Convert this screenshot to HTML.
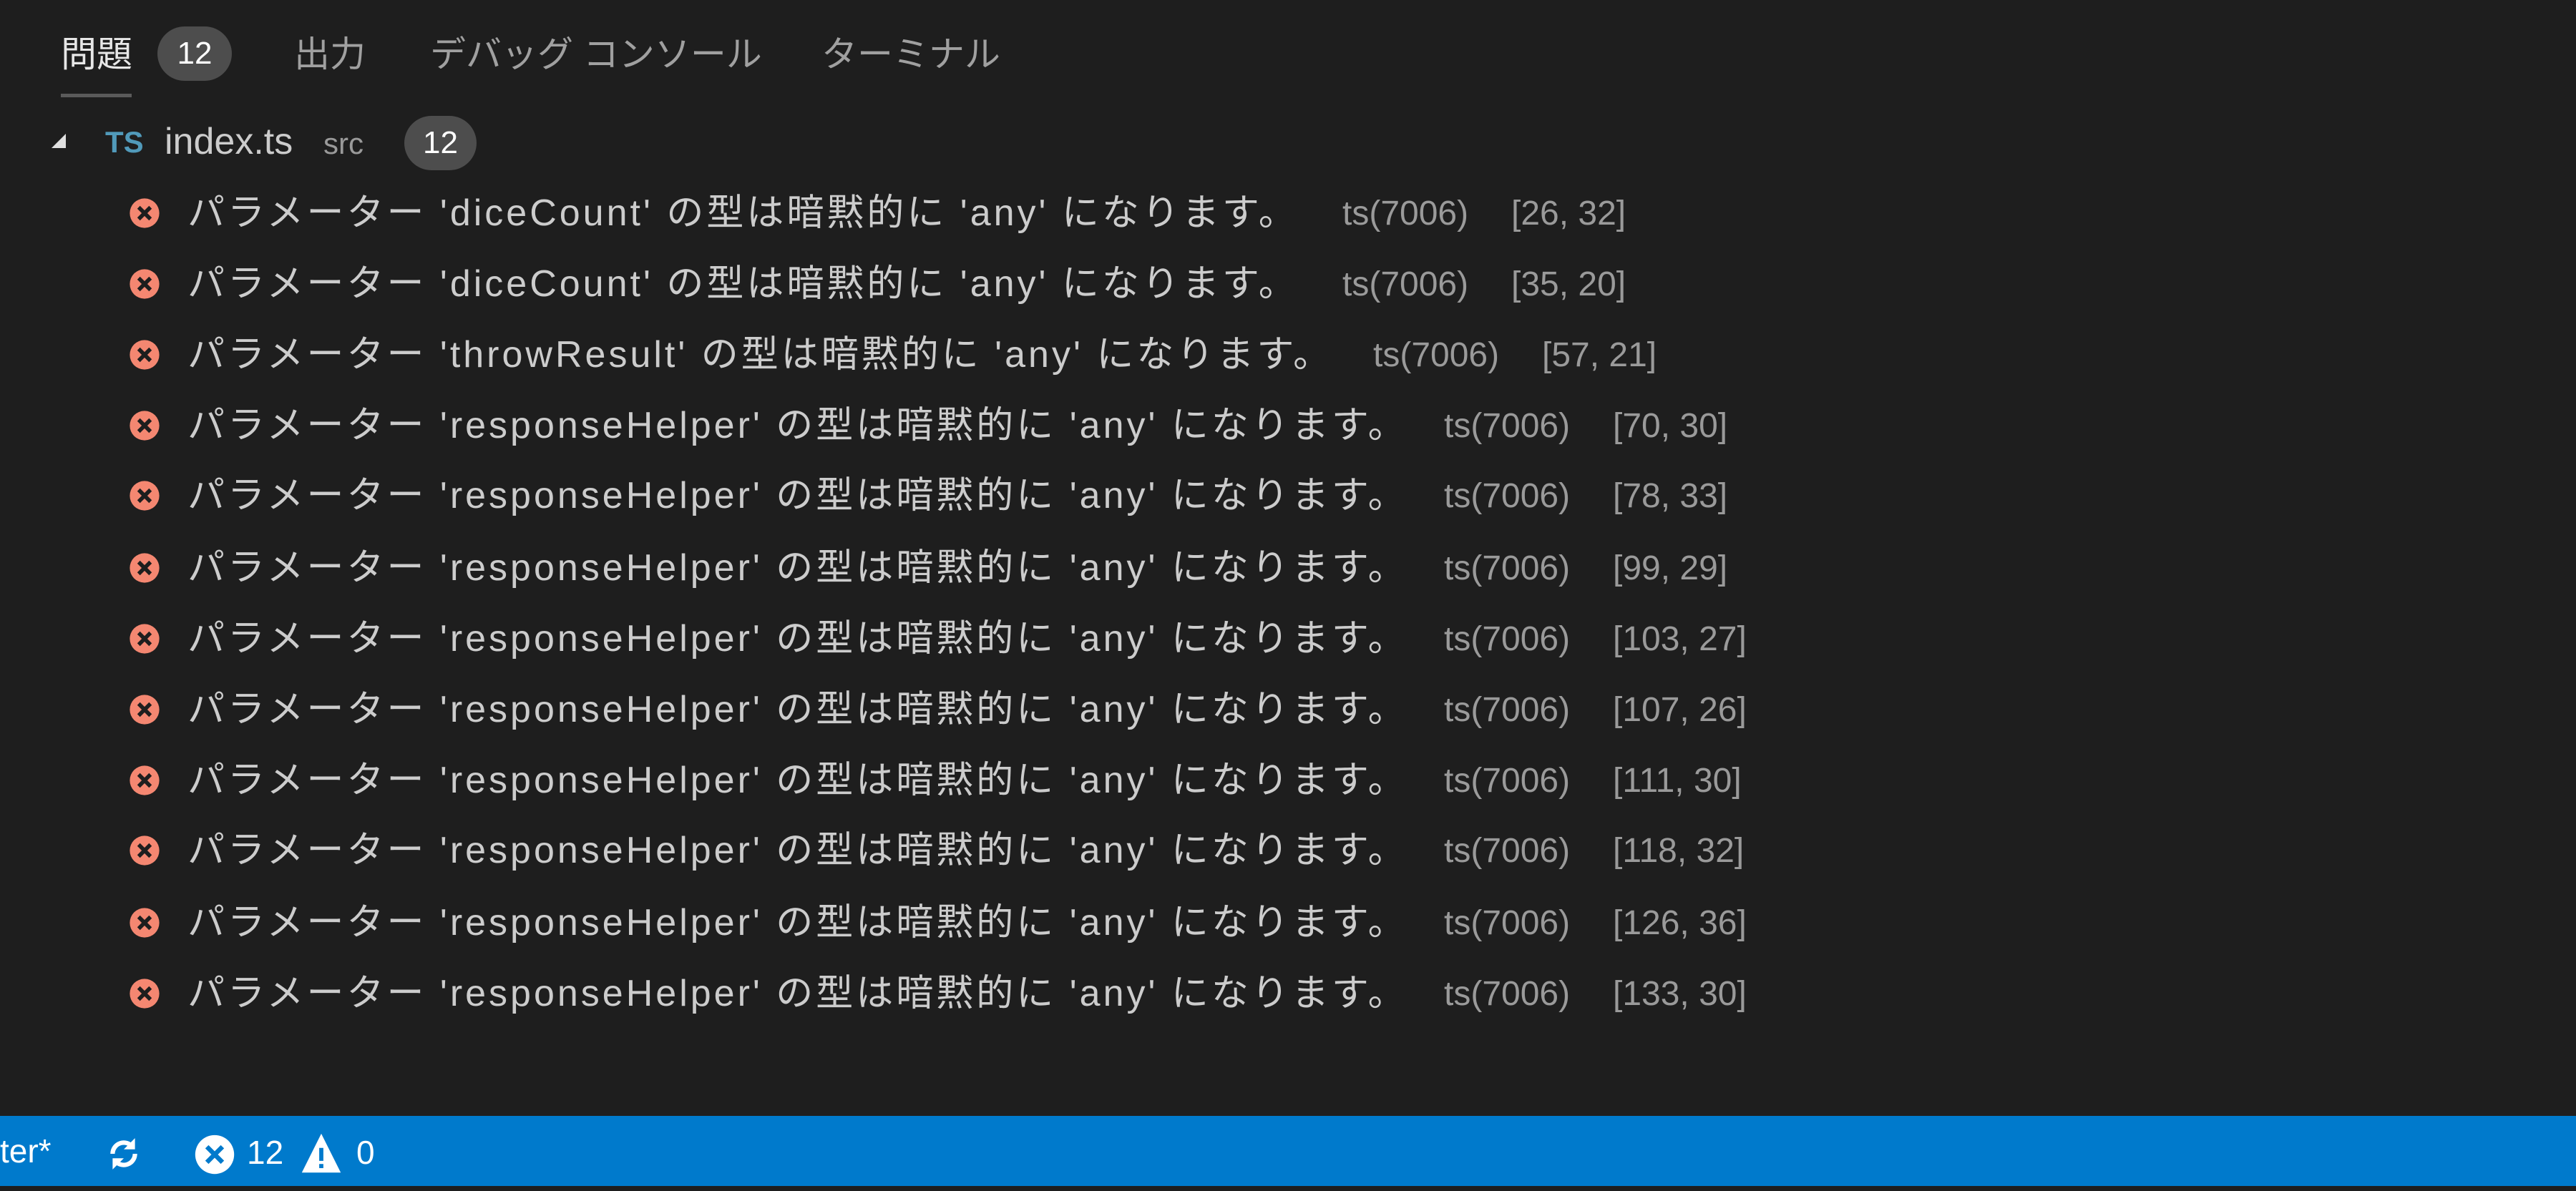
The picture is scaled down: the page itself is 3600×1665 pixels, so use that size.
<!DOCTYPE html>
<html><head><meta charset="utf-8"><style>
html,body{margin:0;padding:0;}
body{width:3600px;height:1665px;background:#1e1e1e;position:relative;overflow:hidden;font-family:"Liberation Sans","Noto Sans CJK JP",sans-serif;color:#cccccc;}
.a{position:absolute;white-space:nowrap;line-height:1;}
.tab{font-size:50px;top:51px;color:#a0a0a0;}
.badge{position:absolute;background:#4d4d4d;color:#fff;border-radius:40px;font-size:44px;text-align:center;}
.row{position:absolute;left:0;height:99px;width:3600px;}
.ic{position:absolute;left:180px;width:44px;height:44px;top:27px;}
.msg{position:absolute;left:262px;top:23px;font-size:52px;letter-spacing:4px;color:#cccccc;white-space:nowrap;line-height:1;}
.ts{position:absolute;top:26px;font-size:48px;color:#9a9a9a;white-space:nowrap;line-height:1;}
</style></head><body>
<div class="a tab" style="left:85px;color:#e7e7e7">問題</div>
<div class="badge" style="left:220px;top:37px;width:104px;height:76px;line-height:76px">12</div>
<div class="a tab" style="left:411px">出力</div>
<div class="a tab" style="left:601px">デバッグ コンソール</div>
<div class="a tab" style="left:1148px">ターミナル</div>
<div style="position:absolute;left:85px;top:131px;width:99px;height:5px;background:#5a5a5a"></div>

<svg style="position:absolute;left:70px;top:185px" width="26" height="26"><polygon points="22,2 22,22 2,22" fill="#e0e0e0"/></svg>
<div class="a" style="left:147px;top:178px;font-size:42px;font-weight:bold;color:#519aba">TS</div>
<div class="a" style="left:230px;top:172px;font-size:52px;color:#cccccc">index.ts</div>
<div class="a" style="left:452px;top:180px;font-size:42px;color:#9a9a9a">src</div>
<div class="badge" style="left:565px;top:162px;width:101px;height:76px;line-height:76px">12</div>

<div id="rows"></div>
<script>
var d=[["diceCount","[26, 32]"],["diceCount","[35, 20]"],["throwResult","[57, 21]"],["responseHelper","[70, 30]"],["responseHelper","[78, 33]"],["responseHelper","[99, 29]"],["responseHelper","[103, 27]"],["responseHelper","[107, 26]"],["responseHelper","[111, 30]"],["responseHelper","[118, 32]"],["responseHelper","[126, 36]"],["responseHelper","[133, 30]"]];
var ys=[298,397,496,595,693,794,893,992,1091,1189,1290,1389];
var h="";
for(var i=0;i<d.length;i++){
 var tx=d[i][0]=="diceCount"?1876:(d[i][0]=="throwResult"?1919:2018);
 h+='<div class="row" style="top:'+(ys[i]-49)+'px"><svg class="ic" viewBox="0 0 16 16"><circle cx="8" cy="8" r="7.5" fill="#f48771"/><path d="M5 5L11 11M11 5L5 11" stroke="#1e1e1e" stroke-width="2"/></svg>'
 +'<div class="msg">パラメーター \''+d[i][0]+'\' の型は暗黙的に \'any\' になります。</div>'
 +'<div class="ts" style="left:'+tx+'px">ts(7006)</div><div class="ts" style="left:'+(tx+236)+'px">'+d[i][1]+'</div></div>';
}
document.getElementById("rows").innerHTML=h;
</script>

<div style="position:absolute;left:0;top:1560px;width:3600px;height:98px;background:#007acc"></div>
<div class="a" style="left:0;top:1586px;font-size:46px;color:#fff">ter*</div>
<svg style="position:absolute;left:148px;top:1588px" width="50" height="50" viewBox="0 0 16 16"><path d="M3 8a5 5 0 0 1 9-3M13 8a5 5 0 0 1-9 3" stroke="#fff" stroke-width="2" fill="none"/><polygon points="13,1 13,6 8,6" fill="#fff"/><polygon points="3,15 3,10 8,10" fill="#fff"/></svg>
<svg style="position:absolute;left:271px;top:1585px" width="58" height="58" viewBox="0 0 16 16"><circle cx="8" cy="8" r="7.5" fill="#fff"/><path d="M5 5L11 11M11 5L5 11" stroke="#007acc" stroke-width="1.8"/></svg>
<div class="a" style="left:345px;top:1588px;font-size:46px;color:#fff">12</div>
<svg style="position:absolute;left:420px;top:1582px" width="58" height="60" viewBox="0 0 16 16"><polygon points="8,0.5 15.5,15.5 0.5,15.5" fill="#fff"/><rect x="7.2" y="6" width="1.6" height="5" fill="#007acc"/><rect x="7.2" y="12.2" width="1.6" height="1.6" fill="#007acc"/></svg>
<div class="a" style="left:498px;top:1588px;font-size:46px;color:#fff">0</div>
</body></html>
